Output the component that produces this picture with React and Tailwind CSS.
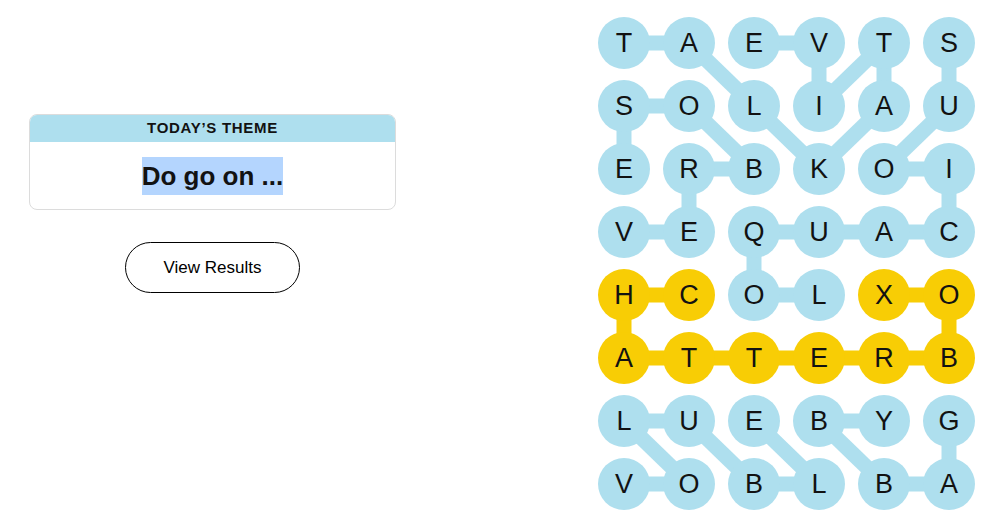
import React from 'react';

const ROWS = ['TAEVTS', 'SOLIAU', 'ERBKOI', 'VEQUAC', 'HCOLXO', 'ATTERB', 'LUEBYG', 'VOBLBA'];

const GOLD = new Set(['4-0', '4-1', '4-4', '4-5', '5-0', '5-1', '5-2', '5-3', '5-4', '5-5']);

// [r1, c1, r2, c2]
const BLUE_LINKS = [
  [0, 0, 0, 1], [0, 1, 1, 2], [0, 2, 0, 3], [0, 3, 1, 3], [1, 3, 0, 4], [0, 4, 1, 4], [0, 5, 1, 5],
  [1, 0, 1, 1], [1, 0, 2, 0], [1, 1, 2, 2], [1, 2, 2, 3], [1, 4, 2, 3], [1, 5, 2, 4],
  [2, 1, 2, 2], [2, 4, 2, 5], [2, 1, 3, 1], [2, 5, 3, 5],
  [3, 0, 3, 1], [3, 2, 3, 3], [3, 3, 3, 4], [3, 4, 3, 5], [3, 2, 4, 2],
  [4, 2, 4, 3],
  [6, 0, 6, 1], [6, 0, 7, 1], [6, 1, 7, 2], [6, 2, 7, 3], [6, 3, 6, 4], [6, 3, 7, 4], [6, 5, 7, 5],
  [7, 0, 7, 1], [7, 2, 7, 3], [7, 4, 7, 5],
];

const GOLD_LINKS = [
  [4, 0, 4, 1], [4, 4, 4, 5], [4, 0, 5, 0], [4, 5, 5, 5],
  [5, 0, 5, 1], [5, 1, 5, 2], [5, 2, 5, 3], [5, 3, 5, 4], [5, 4, 5, 5],
];

const cx = (c) => 26 + 65 * c;
const cy = (r) => 26 + 63 * r;

function Board() {
  return (
    <div className="relative">
      {/* connector strokes sit behind the letter circles */}
      <svg className="absolute inset-0" width="377" height="493" viewBox="0 0 377 493">
        {BLUE_LINKS.map(([r1, c1, r2, c2], i) => (
          <line key={'b' + i} x1={cx(c1)} y1={cy(r1)} x2={cx(c2)} y2={cy(r2)} stroke="#aedfee" strokeWidth="15" />
        ))}
        {GOLD_LINKS.map(([r1, c1, r2, c2], i) => (
          <line key={'g' + i} x1={cx(c1)} y1={cy(r1)} x2={cx(c2)} y2={cy(r2)} stroke="#f8cd05" strokeWidth="15" />
        ))}
      </svg>
      <div className="relative grid grid-cols-[repeat(6,52px)] gap-x-[13px] gap-y-[11px]">
        {ROWS.map((row, r) =>
          row.split('').map((ch, c) => (
            <div
              key={r + '-' + c}
              className={`w-[52px] h-[52px] rounded-full flex items-center justify-center text-[27px] leading-none text-[#121212] ${
                GOLD.has(r + '-' + c) ? 'bg-[#f8cd05]' : 'bg-[#aedfee]'
              }`}
            >
              {ch}
            </div>
          ))
        )}
      </div>
    </div>
  );
}

export default function App() {
  return (
    <div className="flex h-[528px] bg-white font-['Liberation_Sans',Arial,sans-serif] text-[#121212]">
      <div className="w-[367px] ml-[29px] pt-[114px] flex flex-col items-center">
        <div className="w-full rounded-lg border border-[#dcdcdc] overflow-hidden">
          <div className="h-[27px] bg-[#aedfee] flex items-center justify-center text-[15px] font-bold tracking-[0.7px] uppercase">
            Today’s Theme
          </div>
          <div className="h-[67px] flex items-center justify-center">
            <span className="bg-[#b4d5fe] text-[26px] leading-[38px] font-bold">Do go on ...</span>
          </div>
        </div>
        <button className="mt-[32px] w-[175px] h-[51px] rounded-full border border-black text-[17px] text-black bg-white">
          View Results
        </button>
      </div>
      <div className="ml-[202px] pt-[17px]">
        <Board />
      </div>
    </div>
  );
}
